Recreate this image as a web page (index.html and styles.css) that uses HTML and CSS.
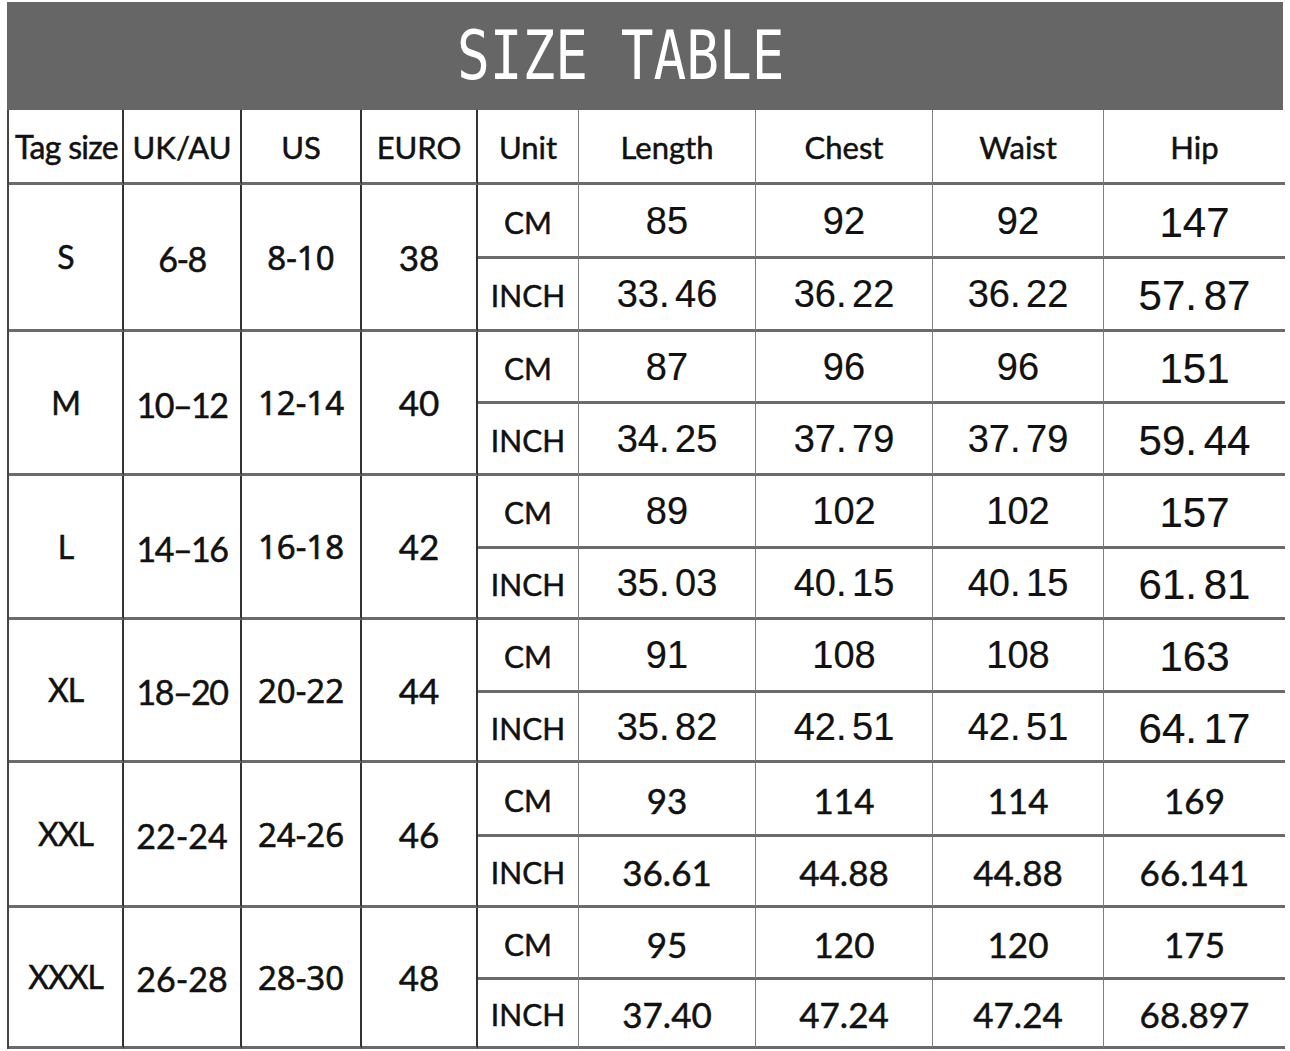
FILE: index.html
```html
<!DOCTYPE html>
<html lang="en">
<head>
<meta charset="utf-8">
<title>Size Table</title>
<link rel="stylesheet" href="styles.css">
</head>
<body>
<div class="sheet">
  <div class="titlebar"><span class="title">SIZE TABLE</span></div>
  <div class="grid">
    <div class="cell hd c1">Tag size</div>
    <div class="cell hd c2">UK/AU</div>
    <div class="cell hd c3">US</div>
    <div class="cell hd c4">EURO</div>
    <div class="cell hd c5">Unit</div>
    <div class="cell hd c6">Length</div>
    <div class="cell hd c7">Chest</div>
    <div class="cell hd c8">Waist</div>
    <div class="cell hd c9">Hip</div>

    <div class="cell c1 blk size">S</div>
    <div class="cell c2 blk uk tight">6-8</div>
    <div class="cell c3 blk us">8-10</div>
    <div class="cell c4 blk euro">38</div>
    <div class="cell c5 unit">CM</div>
    <div class="cell c6 num">85</div>
    <div class="cell c7 num">92</div>
    <div class="cell c8 num">92</div>
    <div class="cell c9 num hip">147</div>
    <div class="cell c5 unit">INCH</div>
    <div class="cell c6 num">33. 46</div>
    <div class="cell c7 num">36. 22</div>
    <div class="cell c8 num">36. 22</div>
    <div class="cell c9 num hip">57. 87</div>

    <div class="cell c1 blk size">M</div>
    <div class="cell c2 blk uk tight">10–12</div>
    <div class="cell c3 blk us">12-14</div>
    <div class="cell c4 blk euro">40</div>
    <div class="cell c5 unit">CM</div>
    <div class="cell c6 num">87</div>
    <div class="cell c7 num">96</div>
    <div class="cell c8 num">96</div>
    <div class="cell c9 num hip">151</div>
    <div class="cell c5 unit">INCH</div>
    <div class="cell c6 num">34. 25</div>
    <div class="cell c7 num">37. 79</div>
    <div class="cell c8 num">37. 79</div>
    <div class="cell c9 num hip">59. 44</div>

    <div class="cell c1 blk size">L</div>
    <div class="cell c2 blk uk tight">14–16</div>
    <div class="cell c3 blk us">16-18</div>
    <div class="cell c4 blk euro">42</div>
    <div class="cell c5 unit">CM</div>
    <div class="cell c6 num">89</div>
    <div class="cell c7 num">102</div>
    <div class="cell c8 num">102</div>
    <div class="cell c9 num hip">157</div>
    <div class="cell c5 unit">INCH</div>
    <div class="cell c6 num">35. 03</div>
    <div class="cell c7 num">40. 15</div>
    <div class="cell c8 num">40. 15</div>
    <div class="cell c9 num hip">61. 81</div>

    <div class="cell c1 blk size">XL</div>
    <div class="cell c2 blk uk tight">18–20</div>
    <div class="cell c3 blk us">20-22</div>
    <div class="cell c4 blk euro">44</div>
    <div class="cell c5 unit">CM</div>
    <div class="cell c6 num">91</div>
    <div class="cell c7 num">108</div>
    <div class="cell c8 num">108</div>
    <div class="cell c9 num hip">163</div>
    <div class="cell c5 unit">INCH</div>
    <div class="cell c6 num">35. 82</div>
    <div class="cell c7 num">42. 51</div>
    <div class="cell c8 num">42. 51</div>
    <div class="cell c9 num hip">64. 17</div>

    <div class="cell c1 blk size">XXL</div>
    <div class="cell c2 blk uk">22-24</div>
    <div class="cell c3 blk us">24-26</div>
    <div class="cell c4 blk euro">46</div>
    <div class="cell c5 unit">CM</div>
    <div class="cell c6 alt">93</div>
    <div class="cell c7 alt">114</div>
    <div class="cell c8 alt">114</div>
    <div class="cell c9 alt">169</div>
    <div class="cell c5 unit">INCH</div>
    <div class="cell c6 alt">36.61</div>
    <div class="cell c7 alt">44.88</div>
    <div class="cell c8 alt">44.88</div>
    <div class="cell c9 alt">66.141</div>

    <div class="cell c1 blk size">XXXL</div>
    <div class="cell c2 blk uk">26-28</div>
    <div class="cell c3 blk us">28-30</div>
    <div class="cell c4 blk euro">48</div>
    <div class="cell c5 unit">CM</div>
    <div class="cell c6 alt">95</div>
    <div class="cell c7 alt">120</div>
    <div class="cell c8 alt">120</div>
    <div class="cell c9 alt">175</div>
    <div class="cell c5 unit">INCH</div>
    <div class="cell c6 alt">37.40</div>
    <div class="cell c7 alt">47.24</div>
    <div class="cell c8 alt">47.24</div>
    <div class="cell c9 alt">68.897</div>
  </div>
</div>
</body>
</html>
```
FILE: styles.css
```css
* { box-sizing: border-box; }

html, body {
  margin: 0;
  padding: 0;
  background: #ffffff;
}

.sheet {
  padding: 2px 7px 0 7px;
  width: 1290px;
}

.titlebar {
  height: 108px;
  background: #666666;
  display: flex;
  align-items: center;
  justify-content: center;
  padding-right: 48px;
}

.title {
  display: inline-block;
  font-family: "DejaVu Sans Mono", "Liberation Mono", monospace;
  font-size: 68px;
  line-height: 1;
  color: #ffffff;
  transform: scaleX(0.8);
  white-space: pre;
}

.grid {
  display: grid;
  grid-template-columns: 115px 118px 120px 116px 101px 177px 177px 171px 181px;
  grid-template-rows: 75px 74px 73px 72px 72px 73px 71px 73px 70px 74px 71px 72px 69px;
  border-left: 2px solid #444444;
}

.cell {
  display: flex;
  align-items: center;
  justify-content: center;
  border-bottom: 3px solid #6b6b6b;
  color: #111111;
  white-space: pre;
  line-height: 1;
}

.c1, .c2, .c3, .c4 { border-right: 2px solid #333333; }
.c5, .c6, .c7, .c8 { border-right: 1px solid #808080; }
.c9 { border-right: none; }

.blk { grid-row: span 2; }

.hd, .size, .uk, .euro, .unit, .alt {
  -webkit-text-stroke: 0.5px #111111;
}

.hd {
  font-family: "Lato", "Open Sans", sans-serif;
  font-size: 31px;
  padding-top: 2px;
}
.hd.c1 { font-size: 32px; letter-spacing: -0.7px; padding-left: 2px; }

.size {
  font-family: "Lato", "Open Sans", sans-serif;
  font-size: 32px;
  letter-spacing: -1px;
}

.uk {
  font-family: "Lato", "Open Sans", sans-serif;
  font-size: 34px;
  padding-top: 4px;
}
.uk.tight { letter-spacing: -1.5px; }

.us {
  font-family: "Noto Sans", "Open Sans", sans-serif;
  font-size: 33px;
  -webkit-text-stroke: 0.6px #111111;
}

.euro {
  font-family: "Lato", "Open Sans", sans-serif;
  font-size: 35px;
}

.unit {
  font-family: "Lato", "Open Sans", sans-serif;
  font-size: 30px;
  padding-top: 2px;
}

.num {
  font-family: "Liberation Sans", Arial, sans-serif;
  font-size: 38px;
  word-spacing: -5px;
  -webkit-text-stroke: 0.2px #111111;
}

.num.hip {
  font-size: 42px;
  padding-top: 4px;
}

.alt {
  font-family: "Lato", "Open Sans", sans-serif;
  font-size: 35px;
  padding-top: 3px;
}
```
